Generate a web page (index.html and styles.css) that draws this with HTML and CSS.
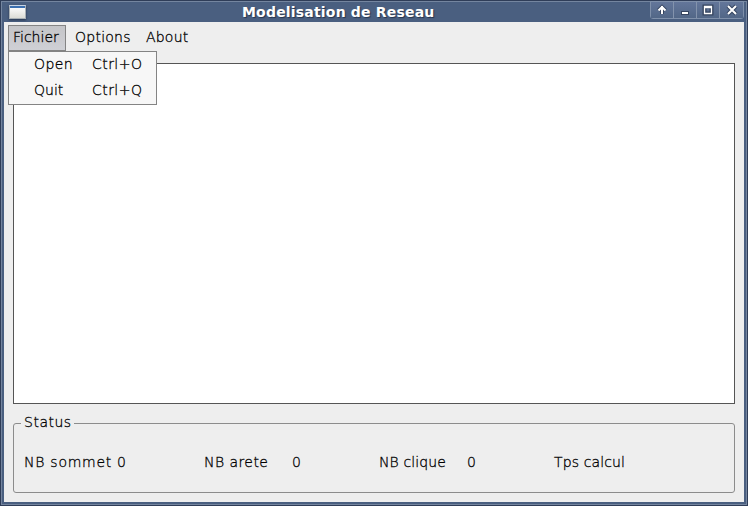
FILE: index.html
```html
<!DOCTYPE html>
<html lang="fr">
<head>
<meta charset="utf-8">
<title>Modelisation de Reseau</title>
<link rel="stylesheet" href="styles.css">
</head>
<body>
<div class="window">
  <header class="titlebar">
    <span class="app-icon"></span>
    <h1 class="title">Modelisation de Reseau</h1>
    <div class="controls">
      <button class="control" aria-label="Shade"><svg width="12" height="12" viewBox="0 0 12 12"><path class="edge" d="M6 2v8M2.5 6.5L6 3 9.5 6.5"/><path d="M6 2v8M2.5 6.5L6 3 9.5 6.5"/></svg></button>
      <button class="control" aria-label="Minimize"><svg width="12" height="12" viewBox="0 0 12 12"><path class="edge" d="M2 9h8"/><path d="M3 9h6"/></svg></button>
      <button class="control" aria-label="Maximize"><svg width="12" height="12" viewBox="0 0 12 12"><path class="edge" d="M2.5 2.5h7v7h-7z"/><path class="thin" d="M2.5 2.5h7v7h-7zM2 3.5h8"/></svg></button>
      <button class="control" aria-label="Close"><svg width="12" height="12" viewBox="0 0 12 12"><path class="edge" d="M2 2l8 8M10 2l-8 8"/><path d="M2 2l8 8M10 2l-8 8"/></svg></button>
    </div>
  </header>
  <main class="content">
    <nav class="menubar">
      <div class="menu open"><span>Fichier</span>
        <div class="dropdown">
          <div class="item"><span class="wide">Open</span><span class="wide">Ctrl+O</span></div>
          <div class="item"><span>Quit</span><span class="wide">Ctrl+Q</span></div>
        </div>
      </div>
      <div class="menu options">Options</div>
      <div class="menu about">About</div>
    </nav>
    <section class="canvas"></section>
    <section class="status">
      <h2 class="legend">Status</h2>
      <div class="row">
        <span class="wider">NB sommet</span><span>0</span>
        <span class="wide">NB arete</span><span>0</span>
        <span class="slight">NB clique</span><span>0</span>
        <span class="slight">Tps calcul</span>
      </div>
    </section>
  </main>
</div>
</body>
</html>
```
FILE: styles.css
```css
* { box-sizing: border-box; }
body {
  margin: 0;
  background: #2b3a55;
  color: #000;
  font: 200 14px/18px "DejaVu Sans Light", "DejaVu Sans ExtraLight", "DejaVu Sans", sans-serif;
  -webkit-text-stroke: 0.3px #000;
}
.window {
  display: flex;
  flex-direction: column;
  width: 748px;
  height: 506px;
  padding: 0 2px 3px;
  border: 1px solid #2f3d58;
  background: #4a5f80;
  box-shadow: inset 0 0 0 1px #74859f;
}
.titlebar {
  display: flex;
  height: 21px;
  padding-left: 6px;
}
.app-icon {
  width: 17px;
  height: 14px;
  margin-top: 4px;
  border: 1px solid #a9b0b5;
  border-top-color: #c8d4e4;
  background: linear-gradient(#3b6fb0 0 2px, #fafafa 2px, #dcdcd6);
  box-shadow: 0 1px 2px #26344d;
}
.title {
  flex: 1;
  margin: 2px 0 0;
  padding-left: 216px;
  font: bold 14px/18px "DejaVu Sans", sans-serif;
  letter-spacing: 0.19px;
  color: #fff;
  text-shadow: 1px 1px 1px #26344d;
  white-space: nowrap;
  -webkit-text-stroke: 0;
}
.controls {
  display: flex;
  height: 18px;
  margin-right: 1px;
  border: 1px solid #7f90aa;
  border-radius: 0 0 3px 3px;
}
.control {
  display: flex;
  align-items: center;
  justify-content: center;
  width: 23px;
  padding: 0;
  border: 0;
  border-right: 1px solid #8393ac;
  background: linear-gradient(#63769a, #526787);
}
.control:last-child { border-right: 0; }
.control svg { fill: none; stroke: #fff; stroke-width: 2; }
.control .edge { stroke: #35445f; stroke-width: 4; }
.control .thin { stroke-width: 1.3; }
.content {
  flex: 1;
  margin: 0 1px;
  padding: 3px 9px 9px;
  background: #eee;
}
.menubar { display: flex; height: 38px; margin-left: -5px; }
.menu { height: 26px; padding-top: 3px; }
.menu.open {
  position: relative;
  width: 58px;
  padding: 2px 0 0 4px;
  border: 1px solid #848484;
  background: linear-gradient(#c5c5c8, #cfd0d5);
}
.options { margin-left: 9px; width: 71px; letter-spacing: 0.25px; }
.about { letter-spacing: 0.2px; }
.dropdown {
  position: absolute;
  z-index: 1;
  top: 25px;
  left: -1px;
  width: 149px;
  height: 54px;
  border: 1px solid #848484;
  background: #f7f7f7;
}
.item {
  display: grid;
  grid-template-columns: 58px auto;
  height: 26px;
  padding: 3px 0 0 25px;
}
.wide { letter-spacing: 0.45px; }
.wider { letter-spacing: 0.75px; white-space: nowrap; }
.slight { letter-spacing: 0.12px; }
.canvas {
  height: 341px;
  border: 1px solid #555;
  background: #fff;
}
.status {
  height: 70px;
  margin-top: 19px;
  border: 1px solid #8c8c8c;
  border-radius: 3px;
}
.legend {
  width: 53px;
  height: 18px;
  margin: -11px 0 0 7px;
  padding-left: 3px;
  background: #eee;
  font: inherit;
  letter-spacing: 0.5px;
}
.row {
  display: grid;
  grid-template-columns: 93px 87px 88px 87px 88px 87px auto;
  margin: 22px 0 0 10px;
}
```
